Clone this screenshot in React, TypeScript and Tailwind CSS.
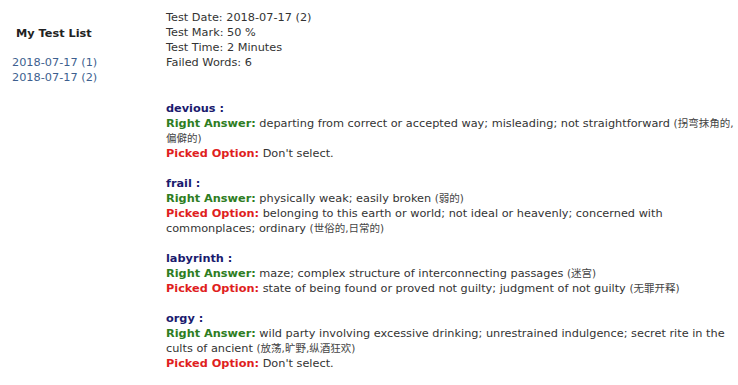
type Part = string | { cn: string } | { keep: string };

const words: { word: string; right: Part[]; picked: Part[] }[] = [
  {
    word: "devious",
    right: ["departing from correct or accepted way; misleading; not straightforward ", { cn: "(拐弯抹角的," }, { cn: "偏僻的)" }],
    picked: ["Don't select."],
  },
  {
    word: "frail",
    right: ["physically weak; easily broken ", { cn: "(弱的)" }],
    picked: [
      "belonging to this earth or world; not ideal or heavenly; concerned with ",
      { keep: "commonplaces; ordinary" },
      " ",
      { cn: "(世俗的,日常的)" },
    ],
  },
  {
    word: "labyrinth",
    right: ["maze; complex structure of interconnecting passages ", { cn: "(迷宫)" }],
    picked: ["state of being found or proved not guilty; judgment of not guilty ", { cn: "(无罪开释)" }],
  },
  {
    word: "orgy",
    right: [
      "wild party involving excessive drinking; unrestrained indulgence; secret rite in the cults of ancient ",
      { cn: "(放荡,旷野,纵酒狂欢)" },
    ],
    picked: ["Don't select."],
  },
];

function Text({ parts }: { parts: Part[] }) {
  return (
    <>
      {parts.map((p, i) =>
        typeof p === "string" ? (
          <span key={i}>{p}</span>
        ) : "cn" in p ? (
          <span key={i} className="whitespace-nowrap text-[10.5px] text-[#444]">{p.cn}</span>
        ) : (
          <span key={i} className="whitespace-nowrap">{p.keep}</span>
        )
      )}
    </>
  );
}

export default function App() {
  return (
    <div
      className="flex min-h-[385px] bg-white text-[11.3px] leading-[15px] text-[#333]"
      style={{ fontFamily: '"DejaVu Sans", "Noto Sans CJK SC", sans-serif' }}
    >
      {/* Left: test list */}
      <div className="w-[166px] flex-shrink-0 pl-3 pt-[26px]">
        <div className="pl-1 font-bold text-[#222]">My Test List</div>
        <div className="mt-[14px] flex flex-col">
          <a className="text-[#3d5f8f]">2018-07-17 (1)</a>
          <a className="text-[#3d5f8f]">2018-07-17 (2)</a>
        </div>
      </div>

      {/* Right: result details */}
      <div className="flex-1 pt-[10px] pr-[2px]">
        <div>Test Date: 2018-07-17 (2)</div>
        <div>Test Mark: 50 %</div>
        <div>Test Time: 2 Minutes</div>
        <div>Failed Words: 6</div>

        <div className="mt-[31px] flex flex-col gap-[15px]">
          {words.map((w) => (
            <div key={w.word}>
              <div className="font-bold text-[#1a1a6e]">{w.word} :</div>
              <div>
                <span className="font-bold text-[#2e7d22]">Right Answer:</span> <Text parts={w.right} />
              </div>
              <div>
                <span className="font-bold text-[#e01e1e]">Picked Option:</span> <Text parts={w.picked} />
              </div>
            </div>
          ))}
        </div>
      </div>
    </div>
  );
}
